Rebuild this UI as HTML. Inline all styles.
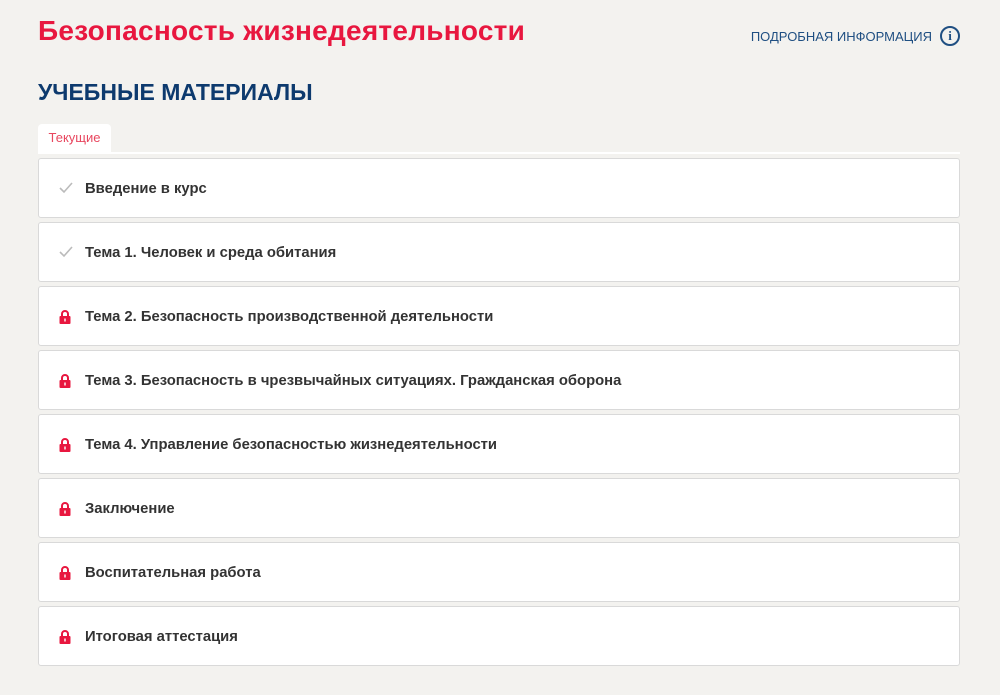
<!DOCTYPE html>
<html><head><meta charset="utf-8"><style>
body{margin:0;background:#f3f2ef;font-family:"Liberation Sans",sans-serif;width:1000px;height:695px;position:relative;overflow:hidden}
.t{position:absolute;left:38px;top:15px;font-size:28px;font-weight:bold;color:#e8173f;letter-spacing:0.25px}
.info{position:absolute;right:40px;top:26px;font-size:13px;color:#1f4f82;display:flex;align-items:center;gap:8px}
.info .c{width:16px;height:16px;border:2px solid #1f4f82;border-radius:50%;font-size:13px;font-weight:bold;text-align:center;line-height:16px;font-family:"Liberation Serif",serif}
.h{position:absolute;left:38px;top:79px;font-size:23px;font-weight:bold;color:#0d3a6e}
.tab{position:absolute;left:38px;top:124px;width:73px;height:29px;background:#fff;border-radius:4px 4px 0 0;color:#e8475f;font-size:13px;text-align:center;line-height:28px}
.line{position:absolute;left:38px;top:152px;width:922px;height:2px;background:#fff}
.row{position:absolute;left:38px;width:920px;height:58px;background:#fff;border:1px solid #d9d9d9;border-radius:3px;display:flex;align-items:center}
.row span{position:absolute;left:46px;top:22px;font-size:14.8px;font-weight:bold;color:#333}
.ic{position:absolute;left:19px;top:22px}
</style></head><body>
<div class="t">Безопасность жизнедеятельности</div>
<div class="info">ПОДРОБНАЯ ИНФОРМАЦИЯ <div class="c">i</div></div>
<div class="h">УЧЕБНЫЕ МАТЕРИАЛЫ</div>
<div class="tab">Текущие</div>
<div class="line"></div>
<div class="row" style="top:158px"><svg class="ic" width="16" height="14"><path d="M2 7l4 4 8-9" stroke="#bbb" stroke-width="1.6" fill="none"/></svg><span>Введение в курс</span></div>
<div class="row" style="top:222px"><svg class="ic" width="16" height="14"><path d="M2 7l4 4 8-9" stroke="#bbb" stroke-width="1.6" fill="none"/></svg><span>Тема 1. Человек и среда обитания</span></div>
<div class="row" style="top:286px"><svg class="ic" width="14" height="15"><path d="M4 7V5a3 3 0 0 1 6 0v2" stroke="#e8173f" stroke-width="2" fill="none"/><rect x="1.5" y="7" width="11" height="8" rx="1" fill="#e8173f"/><rect x="6.3" y="9.5" width="1.4" height="3" fill="#fff"/></svg><span>Тема 2. Безопасность производственной деятельности</span></div>
<div class="row" style="top:350px"><svg class="ic" width="14" height="15"><path d="M4 7V5a3 3 0 0 1 6 0v2" stroke="#e8173f" stroke-width="2" fill="none"/><rect x="1.5" y="7" width="11" height="8" rx="1" fill="#e8173f"/><rect x="6.3" y="9.5" width="1.4" height="3" fill="#fff"/></svg><span>Тема 3. Безопасность в чрезвычайных ситуациях. Гражданская оборона</span></div>
<div class="row" style="top:414px"><svg class="ic" width="14" height="15"><path d="M4 7V5a3 3 0 0 1 6 0v2" stroke="#e8173f" stroke-width="2" fill="none"/><rect x="1.5" y="7" width="11" height="8" rx="1" fill="#e8173f"/><rect x="6.3" y="9.5" width="1.4" height="3" fill="#fff"/></svg><span>Тема 4. Управление безопасностью жизнедеятельности</span></div>
<div class="row" style="top:478px"><svg class="ic" width="14" height="15"><path d="M4 7V5a3 3 0 0 1 6 0v2" stroke="#e8173f" stroke-width="2" fill="none"/><rect x="1.5" y="7" width="11" height="8" rx="1" fill="#e8173f"/><rect x="6.3" y="9.5" width="1.4" height="3" fill="#fff"/></svg><span>Заключение</span></div>
<div class="row" style="top:542px"><svg class="ic" width="14" height="15"><path d="M4 7V5a3 3 0 0 1 6 0v2" stroke="#e8173f" stroke-width="2" fill="none"/><rect x="1.5" y="7" width="11" height="8" rx="1" fill="#e8173f"/><rect x="6.3" y="9.5" width="1.4" height="3" fill="#fff"/></svg><span>Воспитательная работа</span></div>
<div class="row" style="top:606px"><svg class="ic" width="14" height="15"><path d="M4 7V5a3 3 0 0 1 6 0v2" stroke="#e8173f" stroke-width="2" fill="none"/><rect x="1.5" y="7" width="11" height="8" rx="1" fill="#e8173f"/><rect x="6.3" y="9.5" width="1.4" height="3" fill="#fff"/></svg><span>Итоговая аттестация</span></div>
</body></html>
